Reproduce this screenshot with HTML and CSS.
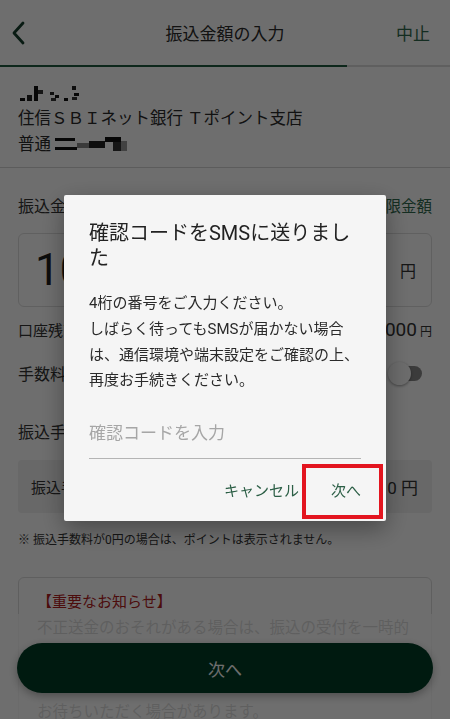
FILE: index.html
```html
<!DOCTYPE html>
<html lang="ja">

<head>
    <meta charset="UTF-8">
    <meta name="viewport" content="width=device-width, initial-scale=1.0">
    <title>振込金額の入力</title>

    <link rel="stylesheet" href="styles.css">
</head>

<body>
    <div class="page">
        <header class="top-bar">
            <button type="button" class="btn-back" aria-label="戻る">
                <svg width="14" height="24" viewBox="0 0 14 24">
                    <path d="M12 2 L3 12 L12 22" fill="none" stroke="#153f2d" stroke-width="2.8" stroke-linecap="round" stroke-linejoin="round" />
                </svg>
            </button>
            <h1>振込金額の入力</h1>
            <button type="button" class="btn-stop">中止</button>
        </header>
        <div class="progress"><span></span></div>

        <section class="account">
            <p class="account-name">
                <svg width="70" height="20" viewBox="0 0 70 20">
                    <rect x="2" y="15" width="5" height="3" fill="#111" />
                    <rect x="9" y="12" width="5" height="6" fill="#222" />
                    <rect x="16" y="3" width="4" height="15" fill="#111" />
                    <rect x="20" y="7" width="5" height="4" fill="#333" />
                    <rect x="32" y="9" width="4" height="3" fill="#222" />
                    <rect x="37" y="12" width="4" height="3" fill="#111" />
                    <rect x="33" y="15" width="5" height="3" fill="#333" />
                    <rect x="46" y="15" width="4" height="3" fill="#111" />
                    <rect x="54" y="3" width="4" height="4" fill="#222" />
                    <rect x="56" y="10" width="5" height="3" fill="#111" />
                    <rect x="54" y="14" width="5" height="3" fill="#333" />
                </svg>
            </p>
            <p>住信ＳＢＩネット銀行 Ｔポイント支店</p>
            <p>普通 <svg width="74" height="18" viewBox="0 0 74 18" class="account-no">
                    <rect x="0" y="3" width="20" height="3" fill="#111" />
                    <rect x="0" y="12" width="22" height="3" fill="#111" />
                    <rect x="22" y="8" width="12" height="5" fill="#888" />
                    <rect x="34" y="6" width="16" height="7" fill="#222" />
                    <rect x="50" y="2" width="16" height="5" fill="#111" />
                    <rect x="58" y="7" width="8" height="9" fill="#333" />
                    <rect x="66" y="6" width="6" height="10" fill="#999" />
                </svg></p>
        </section>

        <section class="transfer">
            <div class="field-head">
                <span class="label">振込金額</span>
                <a href="#" class="link">上限金額</a>
            </div>
            <div class="amount-box">
                <span class="amount">10</span>
                <span class="yen">円</span>
            </div>
            <div class="row">
                <span class="row-label">口座残高</span>
                <span class="balance">100,000<small>円</small></span>
            </div>
            <div class="row">
                <span class="label">手数料をポイントで支払う</span>
                <span class="toggle"><span class="toggle-thumb"></span></span>
            </div>

            <p class="section-title">振込手数料</p>
            <div class="fee-box">
                <span>振込手数料</span>
                <span class="fee">0 円</span>
            </div>
            <p class="note">※ 振込手数料が0円の場合は、ポイントは表示されません。</p>

            <div class="notice">
                <p class="notice-title">【重要なお知らせ】</p>
                <p class="notice-text">不正送金のおそれがある場合は、振込の受付を一時的に留保させていただく場合があります。振込先の入力内容をご確認のうえ、次へボタンを押下時に一定時間お待ちいただく場合があります。</p>
            </div>
        </section>

        <div class="fade"></div>
        <button type="button" class="btn-next">次へ</button>
    </div>

    <div class="overlay">
        <div class="dialog" role="dialog">
            <div class="dialog-body">
                <h2>確認コードをSMSに送りました</h2>
                <p>4桁の番号をご入力ください。<br>しばらく待ってもSMSが届かない場合<br>は、通信環境や端末設定をご確認の上、<br>再度お手続きください。</p>
                <input type="text" placeholder="確認コードを入力">
            </div>
            <div class="dialog-actions">
                <button type="button">キャンセル</button>
                <button type="button" class="marked">次へ</button>
            </div>
        </div>
    </div>
</body>

</html>
```

FILE: styles.css
```css
/* 공통 */
* {
    box-sizing: border-box;
}

body,
h1,
h2,
p {
    margin: 0;
    padding: 0;
}

body {
    width: 450px;
    height: 719px;
    overflow: hidden;
    background: #fff;
    font-family: Roboto, "Noto Sans CJK JP", sans-serif;
    color: #333;
}

button {
    display: block;
    background-color: transparent;
    border: 0;
    padding: 0;
    font-family: inherit;
    cursor: pointer;
}

a {
    text-decoration: none;
}

/* 상단 */
.page {
    position: relative;
    height: 719px;
    overflow: hidden;
}

.top-bar {
    display: grid;
    grid-template-columns: 70px 1fr 70px;
    align-items: center;
    height: 65px;
}

.btn-back {
    width: 40px;
    height: 40px;
    padding-left: 11px;
    text-align: left;
}

.btn-back svg {
    display: block;
}

.top-bar h1 {
    font-size: 17px;
    font-weight: 400;
    color: #2a2a2a;
    text-align: center;
}

.btn-stop {
    justify-self: end;
    padding-right: 20px;
    font-size: 17px;
    color: #2f6a4e;
}

.progress {
    height: 2px;
    background: #dcdcdc;
}

.progress span {
    display: block;
    width: 77%;
    height: 100%;
    background: #1f5a40;
}

/* 口座 */
.account {
    padding: 13px 18px 9px;
    border-bottom: 1px solid #d6d6d6;
    font-size: 16.5px;
    line-height: 26px;
    color: #2a2a2a;
}

.account-name {
    height: 26px;
    padding-top: 3px;
}

.account-no {
    vertical-align: -3px;
}

/* 振込 */
.transfer {
    padding: 0 18px;
}

.field-head {
    display: flex;
    justify-content: space-between;
    align-items: center;
    height: 24px;
    margin-top: 25px;
}

.label {
    font-size: 16px;
}

.link {
    font-size: 15.5px;
    color: #2f6a4e;
}

.amount-box {
    display: flex;
    align-items: center;
    height: 74px;
    margin-top: 16px;
    padding: 0 15px 0 16px;
    border: 1px solid #dedede;
    border-radius: 6px;
}

.amount {
    font-size: 44px;
    color: #1e1e1e;
}

.yen {
    margin-left: auto;
    font-size: 16px;
}

.row {
    display: flex;
    justify-content: space-between;
    align-items: center;
    height: 44px;
}

.row-label {
    font-size: 15px;
}

.balance {
    font-size: 19px;
}

.balance small {
    margin-left: 3px;
    font-size: 12px;
}

.toggle {
    position: relative;
    width: 30px;
    height: 15px;
    margin-right: 10px;
    border-radius: 8px;
    background: #8a8a8a;
}

.toggle-thumb {
    position: absolute;
    left: -4px;
    top: -4px;
    width: 23px;
    height: 23px;
    border-radius: 50%;
    background: #fafafa;
    box-shadow: 0 1px 3px rgba(0, 0, 0, .4);
}

.section-title {
    margin-top: 26px;
    font-size: 16px;
    line-height: 24px;
}

.fee-box {
    display: flex;
    justify-content: space-between;
    align-items: center;
    height: 53px;
    margin-top: 15px;
    padding: 0 14px 0 13px;
    background: #f1f1f1;
    border-radius: 4px;
    font-size: 15px;
}

.fee {
    font-size: 17px;
}

.note {
    margin-top: 18px;
    font-size: 12px;
    line-height: 18px;
}

.notice {
    margin-top: 28px;
    padding: 12px 18px;
    border: 1px solid #dcdcdc;
    border-radius: 6px;
}

.notice-title {
    font-size: 15px;
    line-height: 24px;
    color: #b0201c;
}

.notice-text {
    font-size: 15.5px;
    line-height: 28px;
    color: #666;
}

.fade {
    position: absolute;
    left: 0;
    right: 0;
    bottom: 0;
    height: 105px;
    background: rgba(255, 255, 255, .78);
}

.btn-next {
    position: absolute;
    left: 17px;
    right: 17px;
    bottom: 26px;
    height: 50px;
    border-radius: 25px;
    background: #003d26;
    color: #fff;
    font-size: 17px;
    box-shadow: 0 3px 8px rgba(0, 0, 0, .3);
}

/* ダイアログ */
.overlay {
    position: fixed;
    inset: 0;
    display: flex;
    justify-content: center;
    align-items: center;
    background: rgba(0, 0, 0, .57);
}

.dialog {
    width: 322px;
    margin-top: -3px;
    background: #f5f5f5;
    border-radius: 2px;
    box-shadow: 0 8px 24px rgba(0, 0, 0, .35);
}

.dialog-body {
    padding: 26px 25px 0;
}

.dialog h2 {
    font-size: 20px;
    font-weight: 400;
    line-height: 25px;
    color: #222;
}

.dialog p {
    margin-top: 20px;
    font-size: 15px;
    line-height: 25.6px;
    color: #2a2a2a;
}

.dialog input {
    display: block;
    width: 100%;
    height: 45px;
    margin-top: 20px;
    padding: 0 0 6px;
    border: 0;
    border-bottom: 1.5px solid #b4b4b4;
    background: transparent;
    font-family: inherit;
    font-size: 17px;
    outline: none;
}

.dialog input::placeholder {
    color: #a6a6a6;
}

.dialog-actions {
    display: flex;
    justify-content: flex-end;
    margin-top: 7px;
    padding: 0 9px 7px;
}

.dialog-actions button {
    height: 48px;
    padding: 0 16px;
    font-size: 15px;
    color: #2b5e45;
}

.dialog-actions .marked {
    position: relative;
}

.dialog-actions .marked::after {
    content: "";
    position: absolute;
    top: -2px;
    left: -13px;
    right: -6px;
    bottom: -5px;
    border: 4px solid #e3151f;
}
```
